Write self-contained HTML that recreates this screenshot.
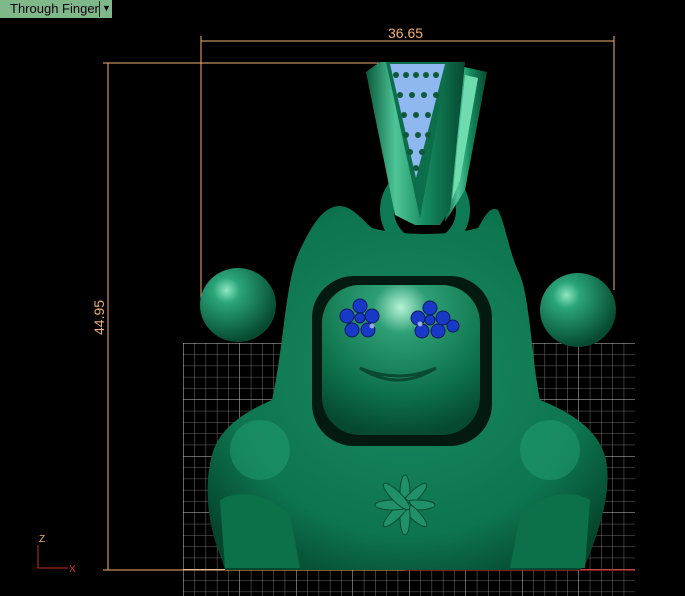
<!DOCTYPE html>
<html><head><meta charset="utf-8"><style>
html,body{margin:0;padding:0;background:#000;width:685px;height:596px;overflow:hidden}
.lab{position:absolute;left:0;top:0;width:112px;height:18px;background:#7fb889;font:13px "Liberation Sans",sans-serif;color:#101;}
.lab span{position:absolute;left:10px;top:1px}
.lab i{position:absolute;left:99px;top:1px;width:1px;height:16px;background:#222}
svg{position:absolute;left:0;top:0}
</style></head><body>
<svg width="685" height="596" viewBox="0 0 685 596">
<defs>
<pattern id="g" x="183" y="343" width="11.3" height="11.3" patternUnits="userSpaceOnUse"><path d="M0 0H11.3M0 0V11.3" stroke="#8a8a8a" stroke-width="0.8" fill="none"/></pattern>
<pattern id="G" x="183" y="343" width="56.5" height="56.5" patternUnits="userSpaceOnUse"><path d="M0 0H56.5M0 0V56.5" stroke="#c8c8c8" stroke-width="1" fill="none"/></pattern>
<radialGradient id="gb" cx="0.5" cy="0.45" r="0.65"><stop offset="0" stop-color="#1a8a60"/><stop offset="0.7" stop-color="#0d7550"/><stop offset="1" stop-color="#05452d"/></radialGradient>
<radialGradient id="ge" cx="0.35" cy="0.3" r="0.7"><stop offset="0" stop-color="#8ee6c0"/><stop offset="0.25" stop-color="#2aa57a"/><stop offset="1" stop-color="#064a31"/></radialGradient>
<radialGradient id="gf" cx="0.5" cy="0.15" r="0.85"><stop offset="0" stop-color="#b6f4d6"/><stop offset="0.2" stop-color="#2e9f75"/><stop offset="0.7" stop-color="#0c7049"/><stop offset="1" stop-color="#064a31"/></radialGradient>
<linearGradient id="gl" x1="0" x2="1"><stop offset="0" stop-color="#0a5a3c"/><stop offset="0.3" stop-color="#4fc698"/><stop offset="0.6" stop-color="#158a5e"/><stop offset="1" stop-color="#064a31"/></linearGradient>
</defs>
<rect x="183" y="343" width="452" height="253" fill="url(#g)"/>
<rect x="183" y="343" width="452" height="253" fill="url(#G)"/>
<g stroke="#f0b070" stroke-width="1" fill="none">
<line x1="201" y1="41" x2="614" y2="41"/><line x1="201" y1="36" x2="201" y2="300"/><line x1="614" y1="36" x2="614" y2="290"/>
<line x1="108" y1="63" x2="108" y2="570"/><line x1="103" y1="63" x2="390" y2="63"/><line x1="103" y1="570" x2="405" y2="570"/>
</g>
<line x1="405" y1="570" x2="635" y2="570" stroke="#b02020" stroke-width="1.5"/>
<text x="388" y="38" fill="#f0b070" font-family="Liberation Sans" font-size="14">36.65</text>
<text x="104" y="335" fill="#f0b070" font-family="Liberation Sans" font-size="14" transform="rotate(-90 104 335)">44.95</text>
<path d="M38 545V568H68" stroke="#c03020" fill="none"/>
<text x="39" y="542" fill="#f0b070" font-family="Liberation Sans" font-size="10">Z</text>
<text x="69" y="572" fill="#d03020" font-family="Liberation Sans" font-size="10">X</text>
<circle cx="425" cy="210" r="38" fill="none" stroke="#0d7a55" stroke-width="14"/>
<!-- body -->
<path d="M222 560 C205 520 205 480 212 455 C220 425 250 410 272 400 C285 340 285 280 300 250 C312 225 322 208 338 206 C352 205 362 220 372 228 C400 236 450 236 478 228 C484 218 490 205 498 210 C506 225 508 250 520 275 C530 300 532 360 540 400 C570 412 600 430 606 460 C612 490 600 530 585 565 L580 570 L225 570 Z" fill="url(#gb)"/>
<ellipse cx="238" cy="305" rx="38" ry="37" fill="url(#ge)"/>
<ellipse cx="578" cy="310" rx="38" ry="37" fill="url(#ge)"/>
<ellipse cx="260" cy="450" rx="30" ry="30" fill="#22a074" opacity="0.5"/>
<ellipse cx="550" cy="450" rx="30" ry="30" fill="#22a074" opacity="0.5"/>
<path d="M220 500 C240 488 270 495 290 515 L300 568 L225 568 Z" fill="#0c7049"/>
<path d="M590 500 C570 488 540 495 520 515 L510 568 L585 568 Z" fill="#0c7049"/>
<!-- face -->
<rect x="312" y="276" width="180" height="170" rx="42" fill="#021a10"/>
<rect x="322" y="285" width="158" height="150" rx="38" fill="url(#gf)"/>
<g fill="#1838c8" stroke="#0a1a60" stroke-width="1">
<circle cx="360" cy="306" r="7"/><circle cx="347" cy="316" r="7"/><circle cx="372" cy="316" r="7"/><circle cx="352" cy="330" r="7"/><circle cx="368" cy="330" r="7"/><circle cx="360" cy="318" r="5"/>
<circle cx="430" cy="308" r="7"/><circle cx="418" cy="318" r="7"/><circle cx="443" cy="318" r="7"/><circle cx="422" cy="331" r="7"/><circle cx="438" cy="331" r="7"/><circle cx="453" cy="326" r="6"/><circle cx="430" cy="320" r="5"/>
</g>
<circle cx="372" cy="326" r="2.5" fill="#9ad"/><circle cx="420" cy="324" r="2.5" fill="#9ad"/>
<path d="M360 368 Q398 392 436 368 Q398 384 360 368Z" fill="#1d8a60" stroke="#0a4a30" stroke-width="3"/>
<g transform="translate(405,505)" fill="#20906a" stroke="#0a4a30">
<ellipse rx="5" ry="18" transform="rotate(0) translate(0,-12)"/><ellipse rx="5" ry="18" transform="rotate(45) translate(0,-12)"/><ellipse rx="5" ry="18" transform="rotate(90) translate(0,-12)"/><ellipse rx="5" ry="18" transform="rotate(135) translate(0,-12)"/><ellipse rx="5" ry="18" transform="rotate(180) translate(0,-12)"/><ellipse rx="5" ry="18" transform="rotate(225) translate(0,-12)"/><ellipse rx="5" ry="18" transform="rotate(270) translate(0,-12)"/><ellipse rx="5" ry="18" transform="rotate(315) translate(0,-12)"/>
</g>
<!-- bail -->
<path d="M455 65 L487 72 L465 190 L445 222 Z" fill="url(#gl)"/>
<path d="M465 75 L478 78 L460 180 L452 200 Z" fill="#6fdcb0"/>
<path d="M380 62 L465 62 L450 210 L440 225 L415 225 L395 215 L366 72 Z" fill="url(#gl)"/>
<path d="M386 62 L448 62 L420 218 Z" fill="#0c6e4a"/>
<path d="M390 64 L445 64 L416 178 Z" fill="#8fb8f0"/>
<g fill="#0c5a3a">
<circle cx="396" cy="75" r="3"/><circle cx="406" cy="75" r="3"/><circle cx="416" cy="75" r="3"/><circle cx="426" cy="75" r="3"/><circle cx="436" cy="75" r="3"/>
<circle cx="400" cy="95" r="3"/><circle cx="412" cy="95" r="3"/><circle cx="424" cy="95" r="3"/><circle cx="436" cy="95" r="3"/>
<circle cx="404" cy="115" r="3"/><circle cx="416" cy="115" r="3"/><circle cx="428" cy="115" r="3"/>
<circle cx="406" cy="135" r="3"/><circle cx="418" cy="135" r="3"/><circle cx="428" cy="135" r="3"/>
<circle cx="410" cy="152" r="3"/><circle cx="422" cy="152" r="3"/><circle cx="416" cy="168" r="3"/>
</g>
</svg>
<div class="lab"><span>Through Finger</span><i></i><span style="left:102px;font-size:9px;top:3px">▼</span></div>
</body></html>
